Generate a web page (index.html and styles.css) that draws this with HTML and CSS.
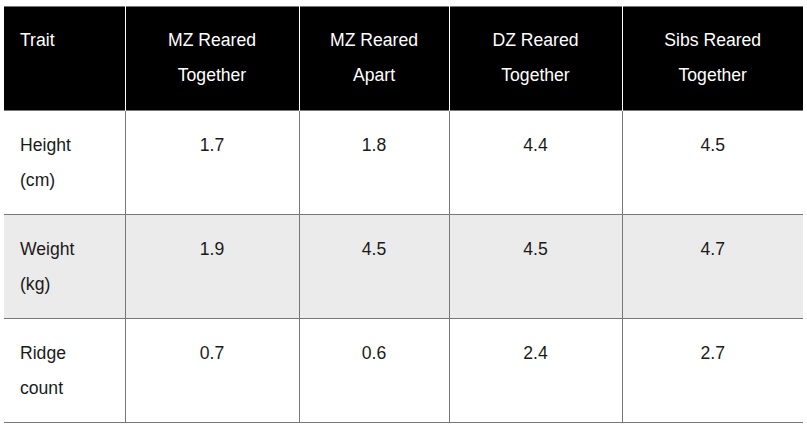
FILE: index.html
```html
<!DOCTYPE html>
<html>
<head>
<meta charset="utf-8">
<link rel="stylesheet" href="styles.css">
</head>
<body>
<div class="wrap">
<table class="traits">
<colgroup>
<col class="c1"><col class="c2"><col class="c3"><col class="c4"><col class="c5">
</colgroup>
<thead>
<tr>
<th class="first">Trait</th>
<th>MZ Reared<br>Together</th>
<th>MZ Reared<br>Apart</th>
<th>DZ Reared<br>Together</th>
<th>Sibs Reared<br>Together</th>
</tr>
</thead>
<tbody>
<tr>
<td class="first">Height<br>(cm)</td>
<td>1.7</td><td>1.8</td><td>4.4</td><td>4.5</td>
</tr>
<tr class="alt">
<td class="first">Weight<br>(kg)</td>
<td>1.9</td><td>4.5</td><td>4.5</td><td>4.7</td>
</tr>
<tr>
<td class="first">Ridge<br>count</td>
<td>0.7</td><td>0.6</td><td>2.4</td><td>2.7</td>
</tr>
</tbody>
</table>
</div>
</body>
</html>
```
FILE: styles.css
```css
html, body {
  margin: 0;
  padding: 0;
  background: #ffffff;
}
.wrap {
  padding: 6px 4px 0 4px;
}
.traits {
  border-collapse: collapse;
  table-layout: fixed;
  width: 799px;
  font-family: "Liberation Sans", Arial, sans-serif;
  font-size: 17.6px;
  line-height: 35px;
  color: #1a1a1a;
}
.c1 { width: 121px; }
.c2 { width: 174px; }
.c3 { width: 150px; }
.c4 { width: 173px; }
.c5 { width: 181px; }
.traits th,
.traits td {
  text-align: center;
  vertical-align: top;
  font-weight: normal;
}
.traits th {
  padding: 16px 16px 17px 16px;
  background: #000000;
  color: #ffffff;
  border-top: 1px solid #777777;
  border-left: 1px solid #ffffff;
  border-right: 1px solid #ffffff;
}
.traits th:first-child { border-left: none; }
.traits th:last-child { border-right: none; }
.traits td {
  padding: 17px 16px 16px 16px;
  border-top: 1px solid #777777;
  border-bottom: 1px solid #777777;
  border-left: 1px solid #777777;
  border-right: 1px solid #777777;
}
.traits td:first-child { border-left: none; }
.traits td:last-child { border-right: none; }
.traits .first {
  text-align: left;
}
.traits .alt td {
  background: #ebebeb;
}
```
